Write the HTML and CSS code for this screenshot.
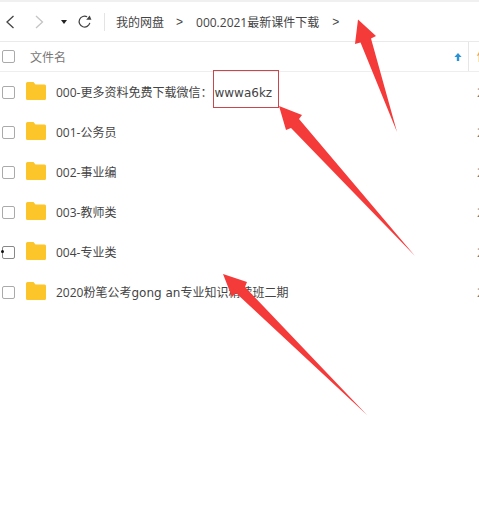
FILE: index.html
```html
<!DOCTYPE html>
<html lang="zh">
<head>
<meta charset="utf-8">
<title>我的网盘</title>
<link rel="stylesheet" href="styles.css">
</head>
<body>
<div class="page">
  <div class="toolbar">
    <svg class="icon back" viewBox="0 0 12 16"><path d="M9.500 2 3 8l6.500 6"/></svg>
    <svg class="icon forward" viewBox="0 0 12 16"><path d="M3 2l6.500 6L3 14"/></svg>
    <span class="caret"></span>
    <svg class="icon refresh" viewBox="0 0 16 16"><path d="M13.700 9.500A5.800 5.800 0 1 1 10.800 3"/><path class="fill" d="M9.800 6.200h5.600L13.500 1.500z"/></svg>
    <span class="divider"></span>
    <span class="crumb first">我的网盘</span>
    <span class="sep">&gt;</span>
    <span class="crumb">000.2021最新课件下载</span>
    <span class="sep last">&gt;</span>
  </div>
  <div class="header">
    <span class="check"></span>
    <span class="col-name">文件名</span>
    <svg class="sort" viewBox="0 0 10 10"><path d="M5 0 9.500 5H6.500v5h-3V5H.5z"/></svg>
    <span class="col-next">修</span>
  </div>
  <div class="row"><span class="check"></span><svg class="folder" viewBox="0 0 20 18"><path d="M1.500 0h6l2 2.500h9a1.500 1.500 0 0 1 1.500 1.500v12.500a1.500 1.500 0 0 1-1.500 1.500h-17a1.500 1.500 0 0 1-1.500-1.500v-15a1.500 1.500 0 0 1 1.500-1.500z"/></svg><span class="name">000-更多资料免费下载微信：<span class="latin code">wwwa6kz</span></span><span class="date">2</span></div>
  <div class="row"><span class="check"></span><svg class="folder" viewBox="0 0 20 18"><path d="M1.500 0h6l2 2.500h9a1.500 1.500 0 0 1 1.500 1.500v12.500a1.500 1.500 0 0 1-1.500 1.500h-17a1.500 1.500 0 0 1-1.500-1.500v-15a1.500 1.500 0 0 1 1.500-1.500z"/></svg><span class="name">001-公务员</span><span class="date">2</span></div>
  <div class="row"><span class="check"></span><svg class="folder" viewBox="0 0 20 18"><path d="M1.500 0h6l2 2.500h9a1.500 1.500 0 0 1 1.500 1.500v12.500a1.500 1.500 0 0 1-1.500 1.500h-17a1.500 1.500 0 0 1-1.500-1.500v-15a1.500 1.500 0 0 1 1.500-1.500z"/></svg><span class="name">002-事业编</span><span class="date">2</span></div>
  <div class="row"><span class="check"></span><svg class="folder" viewBox="0 0 20 18"><path d="M1.500 0h6l2 2.500h9a1.500 1.500 0 0 1 1.500 1.500v12.500a1.500 1.500 0 0 1-1.500 1.500h-17a1.500 1.500 0 0 1-1.500-1.500v-15a1.500 1.500 0 0 1 1.500-1.500z"/></svg><span class="name">003-教师类</span><span class="date">2</span></div>
  <div class="row"><span class="check dotted"></span><svg class="folder" viewBox="0 0 20 18"><path d="M1.500 0h6l2 2.500h9a1.500 1.500 0 0 1 1.500 1.500v12.500a1.500 1.500 0 0 1-1.500 1.500h-17a1.500 1.500 0 0 1-1.500-1.500v-15a1.500 1.500 0 0 1 1.500-1.500z"/></svg><span class="name">004-专业类</span><span class="date">2</span></div>
  <div class="row"><span class="check"></span><svg class="folder" viewBox="0 0 20 18"><path d="M1.500 0h6l2 2.500h9a1.500 1.500 0 0 1 1.500 1.500v12.500a1.500 1.500 0 0 1-1.500 1.500h-17a1.500 1.500 0 0 1-1.500-1.500v-15a1.500 1.500 0 0 1 1.500-1.500z"/></svg><span class="name">2020粉笔公考<span class="latin">gong an</span>专业知识精读班二期</span><span class="date">2</span></div>
  <svg class="arrows" viewBox="0 0 479 510">
    <rect class="box" x="213.500" y="70.500" width="65" height="37"/>
    <path class="arrow" d="M358 19.500 376 36 371 38.500 397 132 360.500 42.500 355 44z"/>
    <path class="arrow" d="M279 106 302 115 299 119 415 256 291 128 286 130z"/>
    <path class="arrow" d="M223 274 247 282 245 287 367 415 236 293 232 297z"/>
  </svg>
</div>
</body>
</html>
```
FILE: styles.css
```css
* { box-sizing: border-box; }
html, body { margin: 0; padding: 0; background: #fff; }
.page {
  position: relative;
  width: 479px;
  height: 510px;
  overflow: hidden;
  font-family: "Open Sans", "Noto Sans CJK SC", sans-serif;
  font-size: 12px;
  color: #444;
  border-top: 2px solid #f0f0f0;
}
.toolbar {
  display: flex;
  align-items: center;
  height: 40px;
  border-bottom: 1px solid #eaeaea;
  padding-left: 4px;
}
.icon { fill: none; stroke: #444; stroke-width: 1.300; flex: none; }
.back { width: 12px; height: 16px; }
.forward { width: 12px; height: 16px; margin-left: 17px; stroke: #c4c4c4; }
.caret {
  flex: none;
  width: 0;
  height: 0;
  margin-left: 16px;
  border: 3px solid transparent;
  border-top: 4px solid #222;
  border-bottom: 0;
}
.refresh { width: 15px; height: 15px; margin-left: 10px; }
.fill { fill: #444; stroke: none; }
.divider { flex: none; width: 1px; height: 18px; background: #e4e4e4; margin-left: 12px; }
.crumb { color: #444; white-space: nowrap; }
.first { margin-left: 11px; }
.sep { margin: 0 13px 0 12px; font-family: "Liberation Sans", sans-serif; color: #444; }
.last { margin-left: 13px; }
.header {
  display: flex;
  align-items: center;
  height: 30px;
  border-bottom: 1px solid #eeeeee;
  padding-left: 2px;
  color: #777;
}
.check {
  flex: none;
  position: relative;
  width: 13px;
  height: 13px;
  border: 1px solid #aaa;
  border-radius: 2px;
  background: #fff;
}
.dotted { border-color: #888; }
.dotted::before {
  content: "";
  position: absolute;
  left: -2px;
  top: 3px;
  width: 3px;
  height: 3px;
  border-radius: 50%;
  background: #111;
}
.col-name { margin-left: 15px; }
.sort { flex: none; width: 8px; height: 10px; margin-left: auto; fill: #2a93d5; }
.col-next {
  flex: none;
  width: 11px;
  height: 29px;
  line-height: 29px;
  margin-left: 6px;
  padding-left: 8px;
  border-left: 1px solid #e6e6e6;
  color: #d9a070;
  overflow: hidden;
  white-space: nowrap;
}
.row { display: flex; align-items: center; height: 40px; padding-left: 2px; }
.folder { flex: none; width: 20px; height: 18px; margin-left: 11px; margin-top: -2px; fill: #fcc52a; }
.name { margin-left: 10px; white-space: nowrap; color: #444; }
.latin { font-family: "DejaVu Sans", sans-serif; }
.code { margin-left: 2px; }
.date { margin-left: auto; width: 2px; overflow: hidden; color: #777; }
.arrows { position: absolute; left: 0; top: -2px; width: 479px; height: 510px; }
.box { fill: none; stroke: #c8474c; stroke-width: 1; }
.arrow { fill: #f53a3a; }
```
